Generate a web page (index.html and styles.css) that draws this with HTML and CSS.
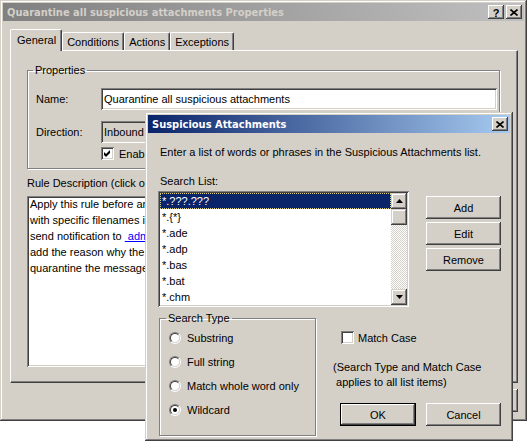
FILE: index.html
```html
<!DOCTYPE html>
<html>
<head>
<meta charset="utf-8">
<title>Suspicious Attachments</title>
<link rel="stylesheet" href="styles.css">
</head>
<body>
<div class="desktop">
  <div class="win main">
    <div class="titlebar inactive">
      <span class="title">Quarantine all suspicious attachments Properties</span>
      <div class="tbtns">
        <span class="tbtn help">?</span>
        <span class="tbtn"><svg width="8" height="7" viewBox="0 0 8 7"><path d="M0.5 0.5 L7.5 6.5 M7.5 0.5 L0.5 6.5" stroke="#000" stroke-width="1.6" fill="none"/></svg></span>
      </div>
    </div>
    <div class="tabs">
      <div class="tab sel">General</div>
      <div class="tab">Conditions</div>
      <div class="tab">Actions</div>
      <div class="tab">Exceptions</div>
    </div>
    <div class="panel">
      <fieldset class="group props">
        <legend>Properties</legend>
        <div class="prow first"><span class="lbl">Name:</span><div class="edit">Quarantine all suspicious attachments</div></div>
        <div class="prow"><span class="lbl">Direction:</span><div class="combo">Inbound</div></div>
        <div class="prow chk"><span class="lbl"></span><span class="check on"><svg width="7" height="7" viewBox="0 0 7 7"><path d="M0 2 L2 4 L6 0 L6 3 L2 7 L0 5 Z" fill="#000"/></svg></span><span>Enabled</span></div>
      </fieldset>
      <div class="rd-label">Rule Description (click on an underlined value to edit it):</div>
      <div class="rd-box">
        <div>Apply this rule before arrival of messages with attachments</div>
        <div>with specific filenames in the Suspicious Attachments list</div>
        <div>send notification to <span class="link">&nbsp;administrator</span></div>
        <div>add the reason why the message was quarantined</div>
        <div>quarantine the message</div>
      </div>
    </div>
    <div class="mainbtns">
      <span class="btn">OK</span>
      <span class="btn">Cancel</span>
      <span class="btn">Apply</span>
    </div>
  </div>

  <div class="win sub">
    <div class="titlebar active">
      <span class="title">Suspicious Attachments</span>
      <div class="tbtns">
        <span class="tbtn"><svg width="8" height="7" viewBox="0 0 8 7"><path d="M0.5 0.5 L7.5 6.5 M7.5 0.5 L0.5 6.5" stroke="#000" stroke-width="1.6" fill="none"/></svg></span>
      </div>
    </div>
    <div class="subbody">
      <div class="intro">Enter a list of words or phrases in the Suspicious Attachments list.</div>
      <div class="sl-label">Search List:</div>
      <div class="listrow">
        <div class="listbox">
          <ul class="items">
            <li class="sel"><span>*.???.???</span></li>
            <li><span>*.{*}</span></li>
            <li><span>*.ade</span></li>
            <li><span>*.adp</span></li>
            <li><span>*.bas</span></li>
            <li><span>*.bat</span></li>
            <li><span>*.chm</span></li>
          </ul>
          <div class="vscroll">
            <span class="sbtn"><svg width="7" height="4" viewBox="0 0 7 4"><path d="M0 4 L3.5 0 L7 4 Z" fill="#000"/></svg></span>
            <span class="sbtn thumb"></span>
            <span class="track"></span>
            <span class="sbtn"><svg width="7" height="4" viewBox="0 0 7 4"><path d="M0 0 L7 0 L3.5 4 Z" fill="#000"/></svg></span>
          </div>
        </div>
        <div class="btncol">
          <span class="btn">Add</span>
          <span class="btn">Edit</span>
          <span class="btn">Remove</span>
        </div>
      </div>
      <div class="lowrow">
        <fieldset class="group stype">
          <legend>Search Type</legend>
          <div class="radio first"><span class="rb"></span><span>Substring</span></div>
          <div class="radio"><span class="rb"></span><span>Full string</span></div>
          <div class="radio"><span class="rb"></span><span>Match whole word only</span></div>
          <div class="radio"><span class="rb on"></span><span>Wildcard</span></div>
        </fieldset>
        <div class="rcol">
          <div class="mc"><span class="check"></span><span>Match Case</span></div>
          <div class="note">(Search Type and Match Case<br>&nbsp;applies to all list items)</div>
          <div class="okrow">
            <span class="btn default">OK</span>
            <span class="btn">Cancel</span>
          </div>
        </div>
      </div>
    </div>
  </div>
</div>
</body>
</html>
```

FILE: styles.css
```css
* { box-sizing: border-box; }

body {
  margin: 0;
  background: #fff;
  font-family: "Liberation Sans", Arial, sans-serif;
  font-size: 11px;
  color: #000;
}

.desktop {
  position: relative;
  width: 531px;
  height: 445px;
  overflow: hidden;
  background: #fff;
}

.win {
  position: absolute;
  display: flex;
  flex-direction: column;
  padding: 3px;
  background: #d4d0c8;
  box-shadow: inset -1px -1px #404040, inset 1px 1px #d4d0c8,
              inset -2px -2px #808080, inset 2px 2px #fff;
}

.main { left: 0; top: 0; width: 527px; height: 421px; }
.sub  { left: 145px; top: 112px; width: 368px; height: 329px; z-index: 2; }

.titlebar {
  height: 18px;
  flex: none;
  display: flex;
  align-items: center;
  padding: 0 2px 0 4px;
}
.title {
  font-family: "DejaVu Sans Condensed", "DejaVu Sans", sans-serif;
  font-stretch: condensed;
  font-weight: bold;
  font-size: 11px;
  white-space: nowrap;
}
.inactive { background: linear-gradient(to right, #808080, #c0c0c0); color: #d4d0c8; }
.active   { background: linear-gradient(to right, #0a246a, #a6caf0); color: #fff; }

.tbtns { margin-left: auto; display: flex; gap: 2px; }
.tbtn {
  width: 16px;
  height: 14px;
  display: flex;
  align-items: center;
  justify-content: center;
  background: #d4d0c8;
  box-shadow: inset -1px -1px #404040, inset 1px 1px #fff,
              inset -2px -2px #808080, inset 2px 2px #d4d0c8;
}
.tbtn.help { font-weight: bold; font-size: 11px; color: #000; padding-top: 1px; }

/* tabs */
.tabs {
  display: flex;
  align-items: flex-end;
  height: 21px;
  margin: 8px 0 0 7px;
  flex: none;
}
.tab {
  height: 18px;
  padding: 0 4px;
  display: flex;
  align-items: center;
  background: #d4d0c8;
  border-top: 1px solid #fff;
  border-left: 1px solid #fff;
  border-right: 1px solid #404040;
  border-radius: 2px 2px 0 0;
  box-shadow: inset -1px 0 #808080;
  white-space: nowrap;
}
.tab.sel {
  height: 22px;
  margin-bottom: -1px;
  position: relative;
  z-index: 1;
  padding: 0 5px 2px 6px;
}

.panel {
  width: 508px;
  height: 333px;
  margin-left: 7px;
  flex: none;
  border-top: 1px solid #fff;
  border-left: 1px solid #fff;
  border-right: 1px solid #404040;
  border-bottom: 1px solid #404040;
  box-shadow: inset -1px -1px #808080;
  padding: 13px 0 0 16px;
}

.group {
  margin: 0;
  border: 1px solid #808080;
  box-shadow: inset 1px 1px #fff, 1px 1px #fff;
  min-width: 0;
}
.group legend {
  line-height: 13px;
  padding: 0 2px;
  margin-left: -3px;
}

.props {
  width: 473px;
  height: 105px;
  padding: 0 0 0 8px;
}
.prow { display: flex; align-items: center; margin-top: 11px; }
.prow.first { margin-top: 11px; }
.prow.chk { margin-top: 4px; height: 13px; }
.lbl { width: 65px; flex: none; }

.edit {
  width: 396px;
  height: 22px;
  background: #fff;
  padding-left: 3px;
  display: flex;
  align-items: center;
  box-shadow: inset 1px 1px #808080, inset -1px -1px #fff,
              inset 2px 2px #404040, inset -2px -2px #d4d0c8;
}
.combo {
  width: 150px;
  height: 22px;
  background: #d4d0c8;
  padding-left: 3px;
  display: flex;
  align-items: center;
  box-shadow: inset 1px 1px #808080, inset -1px -1px #fff,
              inset 2px 2px #404040, inset -2px -2px #d4d0c8;
}

.check {
  width: 13px;
  height: 13px;
  flex: none;
  background: #fff;
  display: flex;
  align-items: center;
  justify-content: center;
  margin-right: 5px;
  box-shadow: inset 1px 1px #808080, inset -1px -1px #fff,
              inset 2px 2px #404040, inset -2px -2px #d4d0c8;
}

.rd-label { margin-top: 8px; line-height: 13px; }
.rd-box {
  margin-top: 6px;
  width: 473px;
  height: 171px;
  background: #fff;
  padding: 0 0 0 3px;
  line-height: 16px;
  white-space: nowrap;
  overflow: hidden;
  box-shadow: inset 1px 1px #808080, inset -1px -1px #fff,
              inset 2px 2px #404040, inset -2px -2px #d4d0c8;
}
.link { color: #0000ff; text-decoration: underline; }

.mainbtns {
  display: flex;
  justify-content: flex-end;
  gap: 6px;
  margin: 6px 6px 0 0;
}

.btn {
  width: 75px;
  height: 23px;
  flex: none;
  display: flex;
  align-items: center;
  justify-content: center;
  background: #d4d0c8;
  box-shadow: inset -1px -1px #404040, inset 1px 1px #fff,
              inset -2px -2px #808080, inset 2px 2px #d4d0c8;
}
.btn.default {
  width: 76px;
  box-shadow: inset 0 0 0 1px #000, inset -2px -2px #404040, inset 2px 2px #fff,
              inset -3px -3px #808080;
}

/* sub dialog */
.subbody {
  display: flex;
  flex-direction: column;
  padding-left: 10px;
}
.intro { margin: 13px 0 0 2px; line-height: 13px; white-space: nowrap; }
.sl-label { margin: 16px 0 0 2px; line-height: 13px; }
.listrow { display: flex; gap: 17px; margin-top: 3px; }

.listbox {
  width: 251px;
  height: 116px;
  padding: 2px;
  display: flex;
  background: #fff;
  box-shadow: inset 1px 1px #808080, inset -1px -1px #fff,
              inset 2px 2px #404040, inset -2px -2px #d4d0c8;
}
.items { list-style: none; margin: 0; padding: 0; flex: 1; }
.items li { height: 16px; line-height: 16px; padding-left: 2px; }
.items li.sel {
  background: #0a246a;
  color: #fff;
  outline: 1px dotted #d8d080;
  outline-offset: -1px;
}
.vscroll { width: 16px; display: flex; flex-direction: column; }
.sbtn {
  height: 16px;
  flex: none;
  display: flex;
  align-items: center;
  justify-content: center;
  background: #d4d0c8;
  box-shadow: inset -1px -1px #404040, inset 1px 1px #d4d0c8,
              inset -2px -2px #808080, inset 2px 2px #fff;
}
.track {
  flex: 1;
  background: repeating-conic-gradient(#fff 0 25%, #d4d0c8 0 50%) 0 0 / 2px 2px;
}

.btncol { display: flex; flex-direction: column; gap: 3px; margin-top: 5px; }

.lowrow { display: flex; margin-top: 5px; }
.stype {
  width: 157px;
  height: 124px;
  margin-left: 1px;
  padding: 0 0 0 9px;
}
.radio { height: 24px; display: flex; align-items: center; }
.radio.first { margin-top: 1px; }
.rb {
  position: relative;
  width: 12px;
  height: 12px;
  flex: none;
  margin-right: 6px;
  border-radius: 50%;
  border: 1px solid;
  border-color: #808080 #fff #fff #808080;
}
.rb::before {
  content: "";
  position: absolute;
  inset: 0;
  border-radius: 50%;
  border: 1px solid;
  border-color: #404040 #d4d0c8 #d4d0c8 #404040;
  background: #fff;
}
.rb.on::after {
  content: "";
  position: absolute;
  left: 3px;
  top: 3px;
  width: 4px;
  height: 4px;
  border-radius: 50%;
  background: #000;
}

.rcol {
  width: 168px;
  margin-left: 17px;
  padding-top: 19px;
  display: flex;
  flex-direction: column;
}
.mc { display: flex; align-items: center; margin-left: 8px; }
.mc .check { margin-right: 4px; }
.note { margin-top: 16px; line-height: 15px; white-space: nowrap; }
.okrow { display: flex; gap: 10px; margin: 13px 0 0 7px; }
```
